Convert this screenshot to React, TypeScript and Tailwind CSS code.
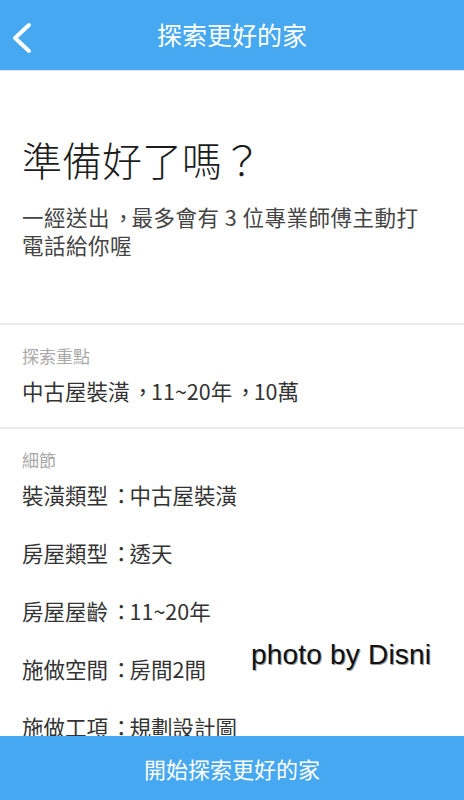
import React from "react";

const cjk = '"Noto Sans CJK TC", "Noto Sans CJK SC", "Noto Sans", sans-serif';

function T({ s }: { s: string }) {
  const parts = s.split(/([：，])/);
  return (
    <>
      {parts.map((p, i) =>
        p === "：" || p === "，" ? (
          <span key={i} className="inline-block pl-[0.12em] tracking-[-0.12em]">
            {p}
          </span>
        ) : (
          <React.Fragment key={i}>{p}</React.Fragment>
        )
      )}
    </>
  );
}

export default function App() {
  const details = [
    "裝潢類型：中古屋裝潢",
    "房屋類型：透天",
    "房屋屋齡：11~20年",
    "施做空間：房間2間",
    "施做工項：規劃設計圖",
  ];
  return (
    <div
      lang="zh-Hant-TW"
      className="relative w-[464px] h-[800px] flex flex-col overflow-hidden bg-white"
      style={{ fontFamily: cjk }}
    >
      <header className="relative h-[71px] shrink-0 bg-[#46a8f0] border-b border-[#e4e4e4] flex items-center justify-center">
        <svg
          className="absolute left-0 top-0"
          width="44"
          height="70"
          viewBox="0 0 44 70"
        >
          <polyline
            points="29,25 15,38 29,51"
            fill="none"
            stroke="#ffffff"
            strokeWidth="4"
            strokeLinecap="round"
            strokeLinejoin="round"
          />
        </svg>
        <h1 className="text-white text-[25px] leading-[32px] -mt-[2px]">探索更好的家</h1>
      </header>

      <main className="flex-1 overflow-hidden">
        <section className="px-[22px] pt-[64px] pb-[64px]">
          <h2 className="text-[40px] leading-[48px] font-light text-[#1c1c1c]">準備好了嗎？</h2>
          <p className="mt-[20px] text-[21.5px] leading-[28px] text-[#444444] tracking-[0.5px]">
            <T s="一經送出，最多會有 3 位專業師傅主動打" />
            <br />
            電話給你喔
          </p>
        </section>

        <div className="h-[2px] bg-[#ececec]" />

        <section className="px-[22px] pt-[19px] pb-[21px]">
          <div className="text-[17px] leading-[24px] text-[#a9a9a9]">探索重點</div>
          <div className="mt-[8px] text-[21.5px] leading-[30px] text-[#333333]">
            <T s="中古屋裝潢，11~20年，10萬" />
          </div>
        </section>

        <div className="h-[2px] bg-[#ececec]" />

        <section className="px-[22px] pt-[19px]">
          <div className="text-[17px] leading-[24px] text-[#a9a9a9]">細節</div>
          <div className="mt-[8px] flex flex-col gap-[28px]">
            {details.map((d) => (
              <div key={d} className="text-[21.5px] leading-[30px] text-[#333333]">
                <T s={d} />
              </div>
            ))}
          </div>
        </section>
      </main>

      <footer className="h-[64px] shrink-0 bg-[#46a8f0] flex items-center justify-center">
        <span className="text-white text-[22px] leading-[30px]">開始探索更好的家</span>
      </footer>

      <div
        className="absolute left-[251px] top-[639px] text-[28px] leading-[32px] text-[#111111] [text-shadow:1px_1px_0_#9a9a9a] whitespace-nowrap tracking-[0.2px]"
        style={{ fontFamily: '"Liberation Sans", Arial, sans-serif' }}
      >
        photo by Disni
      </div>
    </div>
  );
}
